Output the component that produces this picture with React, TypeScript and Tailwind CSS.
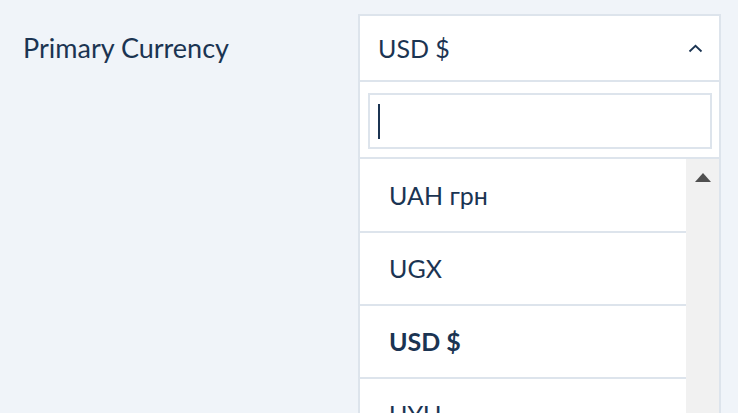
import React from 'react';

const options = [
  { label: 'UAH грн', selected: false },
  { label: 'UGX', selected: false },
  { label: 'USD $', selected: true },
  { label: 'UYU', selected: false },
];

export default function App() {
  return (
    <div
      className="w-[738px] h-[413px] overflow-hidden bg-[#f0f4f9] text-[#1b3452]"
      style={{ fontFamily: 'Lato, "Noto Sans", sans-serif' }}
    >
      <div className="flex pl-[23px] pt-[14px]">
        <div className="w-[335px] h-[66px] flex items-center text-[27px] leading-none">
          Primary Currency
        </div>

        <div className="w-[363px] border-x-2 border-t-2 border-[#dde4ec] bg-white">
          <div className="h-[66px] flex items-center justify-between pl-[18px] pr-[16px] border-b-2 border-[#dde4ec]">
            <span className="text-[25px] leading-none">USD $</span>
            <svg width="15" height="9" viewBox="0 0 15 9" fill="none">
              <path d="M1.5 7.5 L7.5 1.8 L13.5 7.5" stroke="#1b3452" strokeWidth="1.8" />
            </svg>
          </div>

          <div className="pt-[11px] pl-[8px] pr-[7px] pb-[8px] border-b-2 border-[#dde4ec]">
            <div className="h-[56px] border-2 border-[#dde4ec] flex items-center pl-[8px]">
              <div className="w-[2px] h-[35px] bg-[#1b3452]" />
            </div>
          </div>

          <div className="flex">
            <div className="flex-1">
              {options.map((opt) => (
                <div
                  key={opt.label}
                  className="h-[73px] first:h-[72px] border-t-2 first:border-t-0 border-[#dde4ec] flex items-center pl-[29px] text-[25px] leading-none"
                >
                  <span className={opt.selected ? 'font-bold' : ''}>{opt.label}</span>
                </div>
              ))}
            </div>
            <div className="w-[33px] bg-[#f1f1f1] flex justify-center pt-[14px]">
              <svg width="16" height="9" viewBox="0 0 16 9">
                <path d="M8 0 L16 9 L0 9 Z" fill="#505050" />
              </svg>
            </div>
          </div>
        </div>
      </div>
    </div>
  );
}
